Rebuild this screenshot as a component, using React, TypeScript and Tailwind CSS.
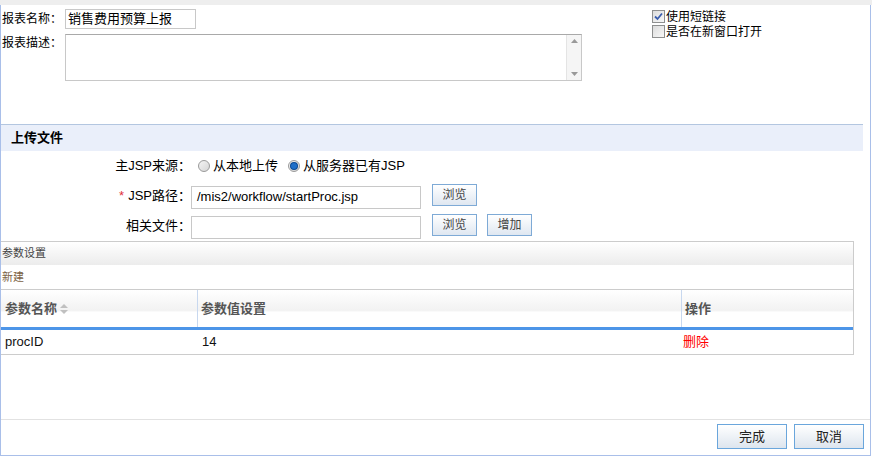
import React from "react";

const font = "font-['Liberation_Sans','Noto_Sans_CJK_SC',sans-serif]";

function Btn({ children, w = "w-[45px]" }: { children: React.ReactNode; w?: string }) {
  return (
    <button
      className={`${w} h-[22px] border border-[#7eaad6] bg-gradient-to-b from-white to-[#dfe7f1] text-[12px] text-[#444] leading-none`}
    >
      {children}
    </button>
  );
}

function Radio({ checked }: { checked?: boolean }) {
  return (
    <span className="w-[12px] h-[12px] rounded-full border border-[#9a9a9a] bg-gradient-to-br from-[#f4f4f4] to-[#d6d6d6] flex items-center justify-center">
      {checked && <span className="w-[6px] h-[6px] rounded-full bg-[#1f6fc8] ring-1 ring-[#0b4a94]" />}
    </span>
  );
}

function Check({ checked }: { checked?: boolean }) {
  return (
    <span className="w-[13px] h-[13px] border border-[#8e8f8f] bg-gradient-to-br from-[#dcdcdc] to-[#f8f8f8] flex items-center justify-center">
      {checked && (
        <svg width="9" height="9" viewBox="0 0 9 9">
          <path d="M1 4.5 L3.5 7 L8 1.5" stroke="#3a5dae" strokeWidth="1.8" fill="none" />
        </svg>
      )}
    </span>
  );
}

export default function App() {
  return (
    <div className={`w-[872px] h-[456px] bg-white text-[12px] text-black ${font} overflow-hidden`}>
      <div className="h-[5px] bg-[#eeeeee]" />
      <div className="w-[871px] h-[451px] border-l border-r border-b border-[#a9bfe9] flex flex-col">
        {/* top form */}
        <div className="h-[119px] flex pl-[1px]">
          <div className="flex flex-col">
            <div className="flex items-center h-[20px] mt-[4px]">
              <span className="w-[63px]">报表名称：</span>
              <div className="w-[131px] h-[20px] border border-[#c8c8c8] flex items-center px-[2px] text-[13px]">
                销售费用预算上报
              </div>
            </div>
            <div className="flex mt-[5px]">
              <span className="w-[63px]">报表描述：</span>
              <div className="w-[517px] h-[47px] border border-[#c8c8c8] border-t-[#a9a9a9] flex justify-end">
                <div className="w-[15px] h-full bg-[#f5f5f5] border-l border-[#e4e4e4] flex flex-col items-center justify-between py-[4px]">
                  <svg width="7" height="4" viewBox="0 0 7 4"><path d="M0 4 L3.5 0 L7 4Z" fill="#999" /></svg>
                  <svg width="7" height="4" viewBox="0 0 7 4"><path d="M0 0 L3.5 4 L7 0Z" fill="#999" /></svg>
                </div>
              </div>
            </div>
          </div>
          <div className="ml-[70px] mt-[5px] flex flex-col gap-[2px] leading-none">
            <div className="flex items-center gap-[1px] h-[13px]">
              <Check checked />
              <span className="leading-none">使用短链接</span>
            </div>
            <div className="flex items-center gap-[1px] h-[13px]">
              <Check />
              <span className="leading-none">是否在新窗口打开</span>
            </div>
          </div>
        </div>

        {/* section header */}
        <div className="w-[862px] h-[27px] border-t border-[#b3c6e0] bg-[#eaeffa] flex items-center pl-[10px] font-bold text-[13px]">
          上传文件
        </div>

        {/* upload rows */}
        <div className="flex flex-col pt-[4px]">
          <div className="flex items-center h-[22px]">
            <span className="w-[190px] text-right text-[13px]">主JSP来源：</span>
            <div className="ml-[7px] flex items-center gap-[3px]">
              <Radio />
              <span className="text-[13px]">从本地上传</span>
            </div>
            <div className="ml-[10px] flex items-center gap-[3px]">
              <Radio checked />
              <span className="text-[13px]">从服务器已有JSP</span>
            </div>
          </div>
          <div className="flex items-center h-[22px] mt-[8px]">
            <span className="w-[190px] text-right text-[13px]">
              <span className="text-[#e0303a] mr-[4px]">*</span>JSP路径：
            </span>
            <div className="w-[230px] h-[23px] border border-[#c8c8c8] flex items-center px-[5px] text-[13px] mt-[2px]">
              /mis2/workflow/startProc.jsp
            </div>
            <div className="ml-[11px] -mt-[2px]">
              <Btn>浏览</Btn>
            </div>
          </div>
          <div className="flex items-center h-[22px] mt-[8px]">
            <span className="w-[190px] text-right text-[13px]">相关文件：</span>
            <div className="w-[230px] h-[23px] border border-[#c8c8c8] mt-[2px]" />
            <div className="ml-[11px] -mt-[2px]">
              <Btn>浏览</Btn>
            </div>
            <div className="ml-[10px] -mt-[2px]">
              <Btn>增加</Btn>
            </div>
          </div>
        </div>

        {/* params box */}
        <div className="w-[853px] h-[114px] mt-[4px] border border-[#cccccc] border-l-0 flex flex-col">
          <div className="h-[23px] bg-gradient-to-b from-white to-[#ececec] flex items-center pl-[1px] text-[11px] text-[#444]">
            参数设置
          </div>
          <div className="h-[24px] flex items-center pl-[1px] text-[11px] text-[#7b6144]">新建</div>
          <div className="h-[38px] border-t border-[#cccccc] flex bg-[linear-gradient(to_bottom,#ffffff_0%,#f2f2f2_55%,#ffffff_60%,#ffffff_100%)] font-bold text-[13px] text-[#555]">
            <div className="w-[197px] border-r border-[#c8d8ef] flex items-center pl-[4px] gap-[3px]">
              参数名称
              <svg width="8" height="10" viewBox="0 0 8 10">
                <path d="M0 4 L4 0 L8 4Z" fill="#c0c0c0" />
                <path d="M0 6 L4 10 L8 6Z" fill="#c0c0c0" />
              </svg>
            </div>
            <div className="w-[484px] border-r border-[#c8d8ef] flex items-center pl-[3px]">参数值设置</div>
            <div className="flex-1 flex items-center pl-[3px]">操作</div>
          </div>
          <div className="h-[3px] bg-[#4d95e8]" />
          <div className="flex-1 flex items-center text-[13px] text-[#111]">
            <div className="w-[198px] pl-[4px]">procID</div>
            <div className="w-[484px] pl-[3px]">14</div>
            <div className="flex-1 text-[#ff0000]">删除</div>
          </div>
        </div>

        {/* footer */}
        <div className="flex-1" />
        <div className="h-[36px] border-t border-[#e2e2e2] flex items-start justify-end pr-[6px] pt-[4px] gap-[7px]">
          <button className="w-[70px] h-[25px] border border-[#6aa6dc] bg-gradient-to-b from-white to-[#dde5ee] text-[13px] text-[#222]">完成</button>
          <button className="w-[70px] h-[25px] border border-[#6aa6dc] bg-gradient-to-b from-white to-[#dde5ee] text-[13px] text-[#222]">取消</button>
        </div>
      </div>
    </div>
  );
}
